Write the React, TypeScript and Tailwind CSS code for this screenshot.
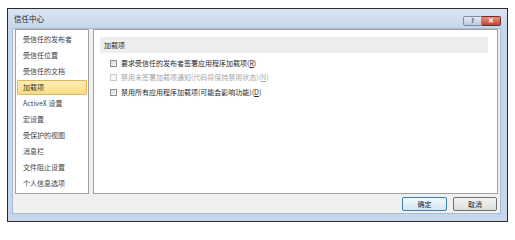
import React from "react";

const font = { fontFamily: '"Noto Sans CJK SC", "Noto Sans", sans-serif' };

const sideItems = [
  "受信任的发布者",
  "受信任位置",
  "受信任的文档",
  "加载项",
  "ActiveX 设置",
  "宏设置",
  "受保护的视图",
  "消息栏",
  "文件阻止设置",
  "个人信息选项",
];

function Check({ disabled, label, hot }: { disabled?: boolean; label: string; hot: string }) {
  return (
    <div className="flex h-[14.5px] items-center">
      <div
        className={
          "h-[7px] w-[7px] border " +
          (disabled ? "border-[#c8c8c8] bg-[#fafafa]" : "border-[#8e8f8f] bg-gradient-to-br from-[#dcdcdc] to-[#f6f6f6]")
        }
      />
      <span className={"ml-[4px] whitespace-nowrap text-[7px] leading-none " + (disabled ? "text-[#a6a6a6]" : "text-[#2a2a2a]")}>
        {label}(<span className="underline">{hot}</span>)
      </span>
    </div>
  );
}

export default function App() {
  return (
    <div className="h-[230px] w-[515px] bg-white pl-[7px] pt-[8px]" style={font}>
      <div className="flex h-[214px] w-[501px] flex-col border border-[#2b2b2b] bg-[#c6d7ec]">
        {/* title bar */}
        <div className="flex h-[19px] items-center bg-gradient-to-b from-[#dae5f3] to-[#c5d6eb] pl-[6px] pr-[6px]">
          <span className="text-[7.5px] leading-none text-[#1e1e1e]">信任中心</span>
          <div className="ml-auto mt-[4px] flex">
            <div className="flex h-[10px] w-[19px] items-center justify-center rounded-l-[2px] border border-[#7c8ea4] bg-gradient-to-b from-[#e4ecf5] to-[#b9cbe0] text-[6px] font-bold leading-none text-[#3a4a5e]">
              ?
            </div>
            <div className="flex h-[10px] w-[19px] items-center justify-center rounded-r-[2px] border border-l-0 border-[#7a2a20] bg-gradient-to-b from-[#e8907f] to-[#c4432f] text-[7px] font-bold leading-none text-white">
              ✕
            </div>
          </div>
        </div>
        {/* body */}
        <div className="ml-[4px] flex h-[186px] w-[489px] flex-col border border-[#a8bbd2] bg-[#f0f0f0]">
          <div className="flex h-[165px] gap-[4px] pl-[2px] pr-[2px]">
            {/* sidebar */}
            <div className="flex w-[74px] flex-col border border-[#a0a0a0] bg-white px-[1px] pt-[1px]">
              {sideItems.map((t) =>
                t === "加载项" ? (
                  <div
                    key={t}
                    className="my-[0.5px] flex h-[15px] items-center rounded-[1px] border border-[#e0b84e] bg-gradient-to-b from-[#fdedb5] to-[#fbdc83] pl-[5px] text-[7px] leading-none text-[#3a3a3a]"
                  >
                    {t}
                  </div>
                ) : (
                  <div key={t} className="flex h-[16px] items-center pl-[6px] text-[7px] leading-none text-[#444]">
                    {t}
                  </div>
                )
              )}
            </div>
            {/* main */}
            <div className="flex flex-1 flex-col border border-[#a0a0a0] bg-white pl-[6px] pr-[9px] pt-[7px]">
              <div className="flex h-[16px] items-center bg-[#eeeeee] pl-[4px] text-[7px] leading-none text-[#2a2a2a]">
                加载项
              </div>
              <div className="mt-[3px] flex flex-col pl-[10px]">
                <Check label="要求受信任的发布者签署应用程序加载项" hot="R" />
                <Check disabled label="禁用未签署加载项通知(代码将保持禁用状态)" hot="N" />
                <Check label="禁用所有应用程序加载项(可能会影响功能)" hot="D" />
              </div>
            </div>
          </div>
          {/* buttons */}
          <div className="mt-[3px] flex justify-end gap-[6px] pr-[3px]">
            <div className="flex h-[14px] w-[45px] items-center justify-center rounded-[2px] border border-[#3c7fb1] bg-gradient-to-b from-[#f2f8fc] to-[#d4e6f3] text-[7px] leading-none text-[#222]">
              确定
            </div>
            <div className="flex h-[14px] w-[44px] items-center justify-center rounded-[2px] border border-[#707070] bg-gradient-to-b from-[#f4f4f4] to-[#dcdcdc] text-[7px] leading-none text-[#222]">
              取消
            </div>
          </div>
        </div>
      </div>
    </div>
  );
}
